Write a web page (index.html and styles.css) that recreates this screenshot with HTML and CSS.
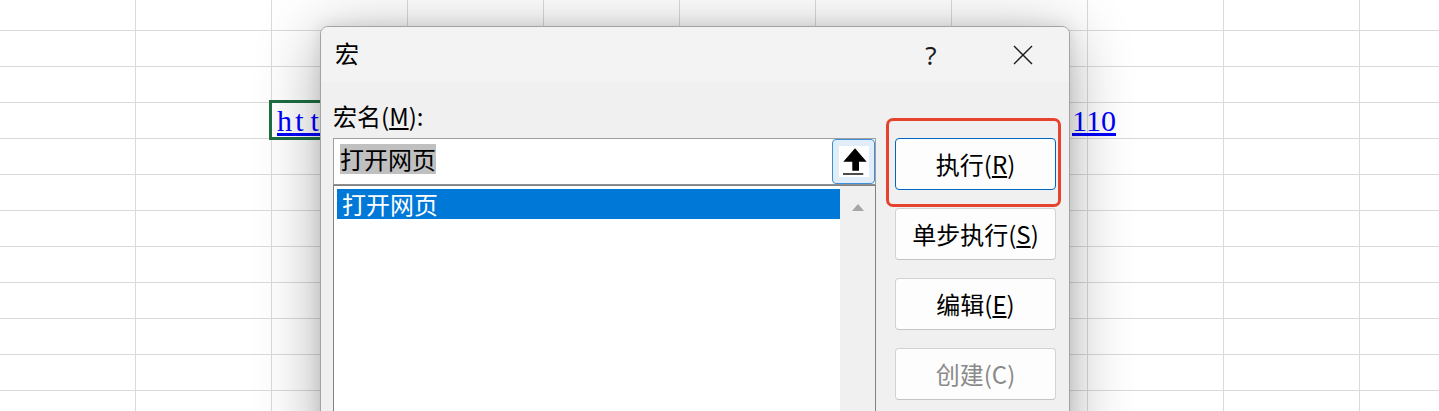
FILE: index.html
```html
<!DOCTYPE html>
<html lang="zh-CN">
<head>
<meta charset="utf-8">
<title>宏</title>
<link rel="stylesheet" href="styles.css">
</head>
<body>
<div class="sheet">
  <div class="cell sel">
    <a class="link" href="#"><span class="lead"><span class="ls-a">h</span><span class="ls-b">t</span><span class="ls-a">t</span></span><span class="gap"></span><span class="tail">110</span></a>
  </div>
</div>

<div class="dialog">
  <div class="titlebar">
    <div class="title">宏</div>
    <div class="tbtn help">?</div>
    <div class="tbtn close">
      <svg width="20" height="20" viewBox="0 0 20 20"><path d="M1 1L19 19M19 1L1 19" stroke="#1b1b1b" stroke-width="1.4" fill="none"/></svg>
    </div>
  </div>
  <div class="dbody">
    <div class="leftcol">
      <div class="lbl">宏名(<u>M</u>):</div>
      <div class="input">
        <div class="value"><span class="hl">打开网页</span></div>
        <div class="upbtn">
          <span class="upicon">
            <svg width="30" height="31" viewBox="0 0 30 31"><path d="M16 2.3 L27.7 15.7 L20 15.7 L20 24.7 L13.3 24.7 L13.3 15.7 L4.3 15.7 Z" fill="#000"/><rect x="4" y="27.3" width="20.3" height="1.4" fill="#000"/></svg>
          </span>
        </div>
      </div>
      <div class="list">
        <div class="items">
          <div class="item selected">打开网页</div>
        </div>
        <div class="scroll"><span class="tri"></span></div>
      </div>
    </div>
    <div class="rightcol">
      <button class="btn primary">执行(<u>R</u>)</button>
      <button class="btn">单步执行(<u>S</u>)</button>
      <button class="btn">编辑(<u>E</u>)</button>
      <button class="btn disabled">创建(C)</button>
    </div>
  </div>
</div>

<div class="mark"></div>
</body>
</html>
```

FILE: styles.css
```css
* { box-sizing: border-box; }
html, body { margin: 0; padding: 0; }
body {
  width: 1439px;
  height: 411px;
  overflow: hidden;
  position: relative;
  background: #ffffff;
  font-family: "Noto Sans CJK SC", "Noto Sans", sans-serif;
  color: #000;
}

/* spreadsheet */
.sheet {
  display: grid;
  grid-template-columns: 135px repeat(10, 136px);
  grid-template-rows: 30px repeat(11, 36px);
  width: 1439px;
  height: 411px;
  background-image:
    linear-gradient(to right, transparent 135px, #dadada 135px),
    linear-gradient(to bottom, transparent 35px, #dadada 35px);
  background-size: 136px 100%, 100% 36px;
  background-position: 0 0, 0 -5px;
}
.cell { min-width: 0; }
.sel {
  grid-column: 3;
  grid-row: 4;
  padding-left: 6px;
  box-shadow: inset 0 0 0 1px #1e6e42, 0 0 0 2px #1e6e42;
  white-space: nowrap;
  position: relative;
}
.link {
  display: flex;
  width: 839px;
  color: #0000ff;
  text-decoration: underline;
  font-family: "Liberation Serif", serif;
  font-size: 30px;
  line-height: 37px;
}
.lead { white-space: nowrap; text-decoration: underline; }
.gap { flex: 1; }
.tail {
  text-decoration: underline;
  padding-left: 0;
}
.ls-a { letter-spacing: 3.35px; }
.ls-b { letter-spacing: 6.7px; }

/* dialog */
.dialog {
  position: absolute;
  left: 320px;
  top: 26px;
  width: 750px;
  height: 430px;
  background: #f0f0f0;
  border: 1px solid #a3a3a3;
  border-radius: 8px;
  box-shadow: 0 10px 64px rgba(0, 0, 0, 0.32), 0 0 16px rgba(0, 0, 0, 0.1);
  display: flex;
  flex-direction: column;
  overflow: hidden;
}
.titlebar {
  height: 55px;
  flex: none;
  display: flex;
  align-items: center;
  background: #f3f3f3;
}
.title {
  flex: 1;
  padding-left: 14px;
  font-size: 24px;
  line-height: 30px;
  margin-bottom: 4px;
}
.tbtn {
  width: 92px;
  height: 55px;
  display: flex;
  align-items: center;
  justify-content: center;
}
.help {
  font-family: "Noto Sans", sans-serif;
  font-size: 26px;
  line-height: 30px;
  color: #1b1b1b;
}
.close svg { display: block; }

.dbody {
  flex: 1;
  display: flex;
  gap: 19px;
  padding: 19px 13px 0 12px;
}
.leftcol {
  width: 543px;
  display: flex;
  flex-direction: column;
}
.lbl {
  font-size: 24px;
  line-height: 30px;
  height: 30px;
  margin-bottom: 7px;
}
.input {
  height: 47px;
  flex: none;
  display: flex;
  border: 1px solid #a0a0a0;
  border-bottom-color: #8e8e8e;
  background: #fff;
}
.value {
  flex: 1;
  padding: 5px 0 0 6px;
  font-size: 24px;
  line-height: 30px;
}
.hl {
  display: inline-block;
  height: 30px;
  line-height: 30px;
  background: #c0c0c0;
  color: #000;
}
.upbtn {
  width: 43px;
  height: 45px;
  border: 1px solid #3d8fdb;
  border-radius: 4px;
  background: #e1eefa;
  display: flex;
  align-items: center;
  justify-content: center;
}
.upicon {
  width: 30px;
  height: 31px;
  background: #fff;
  display: block;
}
.upicon svg { display: block; }

.list {
  flex: 1;
  display: flex;
  border: 1px solid #828282;
  background: #fff;
}
.items {
  width: 506px;
  padding: 3px 0 0 3px;
}
.item {
  height: 30px;
  line-height: 30px;
  padding-left: 5px;
  font-size: 24px;
}
.item.selected {
  background: #0078d7;
  color: #fff;
}
.scroll {
  flex: 1;
  background: #f0f0f0;
  display: flex;
  justify-content: center;
  align-items: flex-start;
}
.tri {
  margin-top: 18px;
  width: 0;
  height: 0;
  border-left: 6px solid transparent;
  border-right: 6px solid transparent;
  border-bottom: 7px solid #a6a6a6;
}

.rightcol {
  width: 161px;
  padding-top: 37px;
  display: flex;
  flex-direction: column;
  gap: 18px;
}
.btn {
  height: 52px;
  flex: none;
  padding: 0;
  border: 1px solid #d2d2d2;
  border-bottom-color: #c4c4c4;
  border-radius: 4px;
  background: #fdfdfd;
  font-family: "Noto Sans CJK SC", "Noto Sans", sans-serif;
  font-size: 24px;
  line-height: 30px;
  color: #000;
}
.btn.primary { border-color: #0067c0; }
.btn.disabled { color: #8a8a8a; }

/* annotation */
.mark {
  position: absolute;
  left: 886px;
  top: 118px;
  width: 175px;
  height: 89px;
  border: 3px solid #e6432f;
  border-radius: 7px;
}
```
